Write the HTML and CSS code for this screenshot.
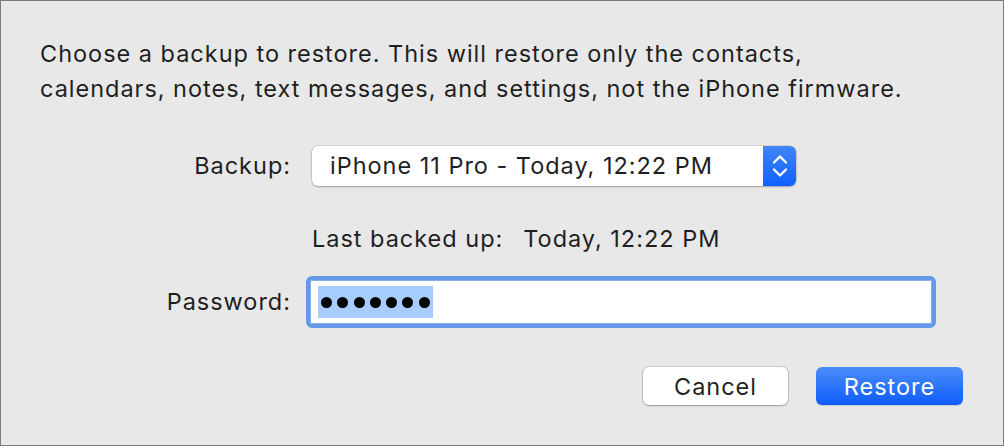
FILE: index.html
```html
<!DOCTYPE html>
<html>
<head>
<meta charset="utf-8">
<link rel="stylesheet" href="styles.css">
</head>
<body>
<div class="dialog">
  <p class="intro">Choose a backup to restore. This will restore only the contacts,<br>calendars, notes, text messages, and settings, not the iPhone firmware.</p>
  <div class="form">
    <div class="label">Backup:</div>
    <div class="popup">
      <span class="popup-text">iPhone 11 Pro - Today, 12:22 PM</span>
      <span class="popup-arrows">
        <svg width="16" height="24" viewBox="0 0 16 24"><path d="M2 8.5 L8 2.5 L14 8.5 M2 15.5 L8 21.5 L14 15.5" fill="none" stroke="#fff" stroke-width="2.3" stroke-linecap="round" stroke-linejoin="round"/></svg>
      </span>
    </div>
    <div class="label"></div>
    <div class="last">Last backed up:<span class="last-val">Today, 12:22 PM</span></div>
    <div class="label">Password:</div>
    <div class="field"><span class="sel"><i class="dot"></i><i class="dot"></i><i class="dot"></i><i class="dot"></i><i class="dot"></i><i class="dot"></i><i class="dot"></i></span></div>
  </div>
  <div class="buttons">
    <button class="btn cancel">Cancel</button>
    <button class="btn restore">Restore</button>
  </div>
</div>
</body>
</html>
```
FILE: styles.css
```css
html, body { margin: 0; padding: 0; }
body {
  width: 1004px;
  height: 446px;
  font-family: "Inter", "Liberation Sans", sans-serif;
  color: #1f1f1f;
}
.dialog {
  box-sizing: border-box;
  width: 1004px;
  height: 446px;
  background: #e8e8e8;
  border: 1px solid #7b7b7b;
  padding: 35px 40px 0 39px;
  display: flex;
  flex-direction: column;
  font-size: 23.5px;
  letter-spacing: 0.98px;
}
.intro {
  margin: 0;
  line-height: 35px;
}
.form {
  margin-top: 40px;
  display: grid;
  grid-template-columns: 251px 624px;
  column-gap: 21px;
  row-gap: 0;
  align-items: center;
}
.label {
  text-align: right;
  line-height: 28px;
}
.popup {
  box-sizing: border-box;
  width: 484px;
  height: 40px;
  background: #fff;
  border-radius: 6px;
  box-shadow: 0 0 0 0.5px rgba(0,0,0,0.18), 0 1px 2px rgba(0,0,0,0.25);
  display: flex;
  align-items: center;
  justify-content: space-between;
  overflow: hidden;
}
.popup-text {
  padding-left: 18px;
  line-height: 28px;
}
.popup-arrows {
  width: 33px;
  height: 40px;
  background: linear-gradient(#3f86f8, #1060fd);
  display: flex;
  align-items: center;
  justify-content: center;
}
.last {
  margin-top: 39px;
  margin-bottom: 23px;
  line-height: 28px;
}
.last-val { margin-left: 20px; }
.field {
  box-sizing: border-box;
  margin-left: -6px;
  width: 630px;
  height: 52px;
  border: 4px solid #6498e8;
  border-radius: 6px;
  background: #fff;
  box-shadow: inset 0 0 0 1px #8aaee6;
  display: flex;
  align-items: center;
  padding-left: 8px;
}
.sel {
  background: #a6cdfd;
  height: 32px;
  width: 115px;
  box-sizing: border-box;
  padding-left: 3px;
  display: flex;
  align-items: center;
  gap: 5.3px;
}
.dot {
  width: 11px;
  height: 11px;
  border-radius: 50%;
  background: #000;
  flex: none;
}
.buttons {
  margin-top: 39px;
  display: flex;
  justify-content: flex-end;
  gap: 28px;
}
.btn {
  height: 38px;
  border-radius: 6px;
  font-family: "Inter", "Liberation Sans", sans-serif;
  font-size: 23.5px;
  letter-spacing: 0.98px;
  padding: 0;
  border: none;
}
.cancel {
  width: 145px;
  background: #fff;
  color: #1f1f1f;
  box-shadow: 0 0 0 0.5px rgba(0,0,0,0.25), 0 1px 2px rgba(0,0,0,0.25);
}
.restore {
  width: 147px;
  color: #fff;
  background: linear-gradient(#4a8df8, #0f5cfd);
  box-shadow: 0 1px 1px rgba(0,0,0,0.15);
}
```
